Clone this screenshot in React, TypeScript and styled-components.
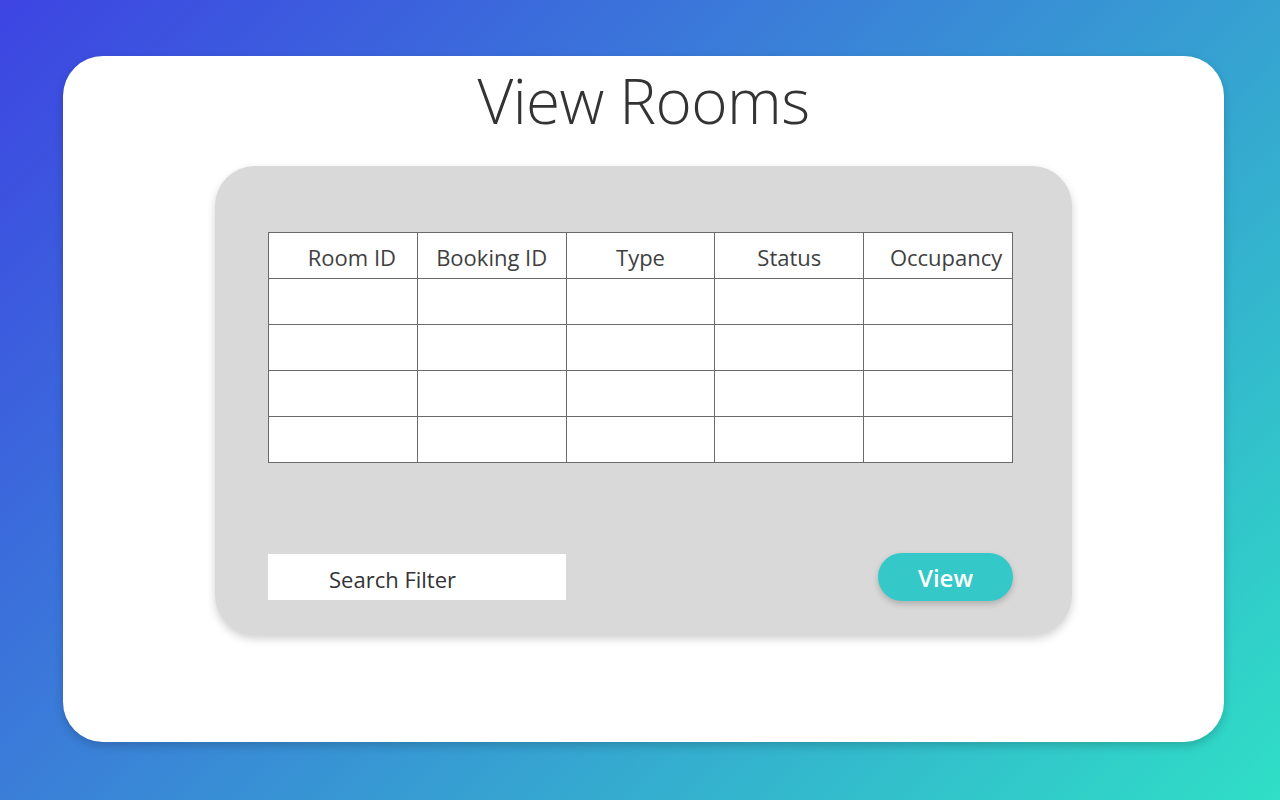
import React from "react";
import styled, { createGlobalStyle } from "styled-components";

const GlobalStyle = createGlobalStyle`
  html, body { margin: 0; padding: 0; }
  body { font-family: "Open Sans", "Noto Sans", sans-serif; }
`;

const Page = styled.div`
  width: 1280px;
  height: 800px;
  box-sizing: border-box;
  padding: 56px 56px 58px 63px;
  background: linear-gradient(135deg, #3d44e2 0%, #3a80d8 40%, #33b7cd 75%, #2fdfc6 100%);
  display: flex;
`;

const Card = styled.div`
  flex: 1;
  background: #ffffff;
  border-radius: 40px;
  box-shadow: 0 4px 10px rgba(0, 0, 0, 0.18);
  display: flex;
  flex-direction: column;
  align-items: center;
  padding-top: 7px;
`;

const Title = styled.h1`
  margin: 0;
  font-family: "Open Sans", sans-serif;
  font-weight: 300;
  font-size: 62px;
  line-height: 74px;
  color: #333333;
  letter-spacing: -0.6px;
`;

const Panel = styled.div`
  margin-top: 29px;
  width: 857px;
  height: 469px;
  box-sizing: border-box;
  background: #d9d9d9;
  border-radius: 40px;
  box-shadow: 0 4px 8px rgba(0, 0, 0, 0.18);
  padding: 66px 59px 0 53px;
  display: flex;
  flex-direction: column;
`;

const Table = styled.div`
  display: grid;
  grid-template-columns: repeat(5, 1fr);
  grid-auto-rows: 46px;
  width: 745px;
  border-top: 1px solid #6a6a6a;
  border-left: 1px solid #6a6a6a;
  box-sizing: border-box;
`;

const Cell = styled.div<{ $shift?: number }>`
  background: #ffffff;
  border-right: 1px solid #6a6a6a;
  border-bottom: 1px solid #6a6a6a;
  box-sizing: border-box;
  display: flex;
  align-items: center;
  justify-content: center;
  padding-left: ${(p) => (p.$shift ?? 0) * 2}px;
  padding-top: 3px;
  font-size: 22px;
  color: #3f3f3f;
  white-space: nowrap;
  overflow: visible;
`;

const Footer = styled.div`
  margin-top: 90px;
  display: flex;
  align-items: center;
  justify-content: space-between;
`;

const Search = styled.div`
  width: 298px;
  height: 46px;
  background: #ffffff;
  box-sizing: border-box;
  padding-left: 61px;
  padding-top: 3px;
  display: flex;
  align-items: center;
  font-size: 22px;
  color: #333333;
`;

const ViewButton = styled.button`
  width: 135px;
  height: 48px;
  border: none;
  border-radius: 24px;
  background: #34c9c8;
  color: #ffffff;
  font-family: "Open Sans", sans-serif;
  font-weight: 600;
  font-size: 24px;
  box-shadow: 0 3px 6px rgba(0, 0, 0, 0.2);
  padding: 0;
  cursor: pointer;
`;

const headers: { label: string; shift: number }[] = [
  { label: "Room ID", shift: 9 },
  { label: "Booking ID", shift: 0 },
  { label: "Type", shift: 0 },
  { label: "Status", shift: 0 },
  { label: "Occupancy", shift: 8 },
];

export default function App() {
  return (
    <>
      <GlobalStyle />
      <Page>
        <Card>
          <Title>View Rooms</Title>
          <Panel>
            <Table>
              {headers.map((h) => (
                <Cell key={h.label} $shift={h.shift}>
                  {h.label}
                </Cell>
              ))}
              {Array.from({ length: 20 }).map((_, i) => (
                <Cell key={i} />
              ))}
            </Table>
            <Footer>
              <Search>Search Filter</Search>
              <ViewButton>View</ViewButton>
            </Footer>
          </Panel>
        </Card>
      </Page>
    </>
  );
}
